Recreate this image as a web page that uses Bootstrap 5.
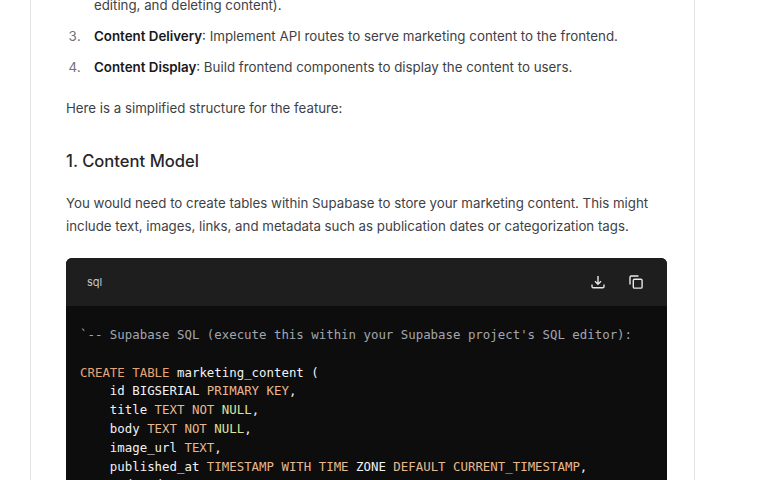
<!DOCTYPE html>
<html lang="en">
<head>
<meta charset="utf-8">
<title>Content feature</title>
<link href="https://cdn.jsdelivr.net/npm/bootstrap@5.3.0/dist/css/bootstrap.min.css" rel="stylesheet">
<style>
html,body{height:480px;overflow:hidden;background:#fff}
.doc-panel{width:665px;height:480px;margin-left:30px;border-left:1px solid #e4e4e7;border-right:1px solid #e4e4e7;padding:0 28px 0 35px;overflow:hidden;font-family:Inter,"Liberation Sans",sans-serif;font-size:13.27px;line-height:23px;color:#3f3f46;letter-spacing:0}
.doc-list{margin:-6px 0 0;padding-left:28px}
.doc-list li{margin-bottom:8px}
.doc-list li[value]{font-size:13.34px}
.doc-list li::marker{content:counter(list-item) ".\2002\2002";color:#71717a}
.doc-list li.list-unstyled::marker{content:""}
.doc-list strong{font-weight:600;color:#18181b}
.doc-text{margin:0}
.doc-intro{margin:18px 0 0}
.doc-heading{font-size:16.6px;line-height:24px;font-weight:500;color:#27272a;margin:29px 0 19px}
.code-shell{margin-top:20px;width:601px;height:240px;border-radius:6px 6px 0 0;background:#0d0d0e;overflow:hidden}
.code-bar{height:48px;background:#1e1e1f;padding:0 24px 0 21px;color:#c8c8cc;font-size:11px}
.code-body{margin:0;padding:20px 14px 0;font-family:"DejaVu Sans Mono","Liberation Mono",monospace;font-size:12.4px;line-height:18.8px;color:#f2f2f2;overflow:hidden}
.code-body code{font:inherit;color:inherit}
.tok-c{color:#a3a6ad}
.tok-k{color:#e5a578}
.tok-t{color:#e8b98e}
.tok-n{color:#dfe39a}
.ico{display:block;color:#e8e8e8}
</style>
</head>
<body>
<div class="doc-panel">
<ol class="doc-list" start="2">
<li class="list-unstyled">editing, and deleting content).</li>
<li value="3"><strong>Content Delivery</strong>: Implement API routes to serve marketing content to the frontend.</li>
<li value="4"><strong>Content Display</strong>: Build frontend components to display the content to users.</li>
</ol>
<p class="doc-intro">Here is a simplified structure for the feature:</p>
<h3 class="doc-heading">1. Content Model</h3>
<p class="doc-text">You would need to create tables within Supabase to store your marketing content. This might include text, images, links, and metadata such as publication dates or categorization tags.</p>
<div class="code-shell">
<div class="code-bar d-flex align-items-center justify-content-between">
<span>sql</span>
<div class="d-flex align-items-center gap-4">
<svg class="ico" width="14" height="14" viewBox="0 0 14 14" fill="none" stroke="currentColor" stroke-width="1.4"><path d="M7 1v8M4 6.2 7 9.2l3-3"/><path d="M1 9.5v2a1.2 1.2 0 0 0 1.2 1.2h9.6A1.2 1.2 0 0 0 13 11.500v-2"/></svg>
<svg class="ico" width="14" height="14" viewBox="0 0 14 14" fill="none" stroke="currentColor" stroke-width="1.4"><rect x="4.300" y="4.300" width="8.800" height="8.800" rx="1.200"/><path d="M9.500 1H2.200A1.200 1.200 0 0 0 1 2.200V9.500"/></svg>
</div>
</div>
<pre class="code-body"><code><span class="tok-c">`-- Supabase SQL (execute this within your Supabase project's SQL editor):</span>

<span class="tok-k">CREATE</span> <span class="tok-k">TABLE</span> marketing_content (
    id BIGSERIAL <span class="tok-t">PRIMARY KEY</span>,
    title <span class="tok-t">TEXT</span> <span class="tok-t">NOT</span> <span class="tok-n">NULL</span>,
    body <span class="tok-t">TEXT</span> <span class="tok-t">NOT</span> <span class="tok-n">NULL</span>,
    image_url <span class="tok-t">TEXT</span>,
    published_at <span class="tok-t">TIMESTAMP WITH TIME</span> ZONE <span class="tok-t">DEFAULT</span> <span class="tok-t">CURRENT_TIMESTAMP</span>,
    updated_at <span class="tok-t">TIMESTAMP WITH TIME</span> ZONE</code></pre>
</div>
</div>
<script src="https://cdn.jsdelivr.net/npm/bootstrap@5.3.0/dist/js/bootstrap.bundle.min.js"></script>
</body>
</html>
